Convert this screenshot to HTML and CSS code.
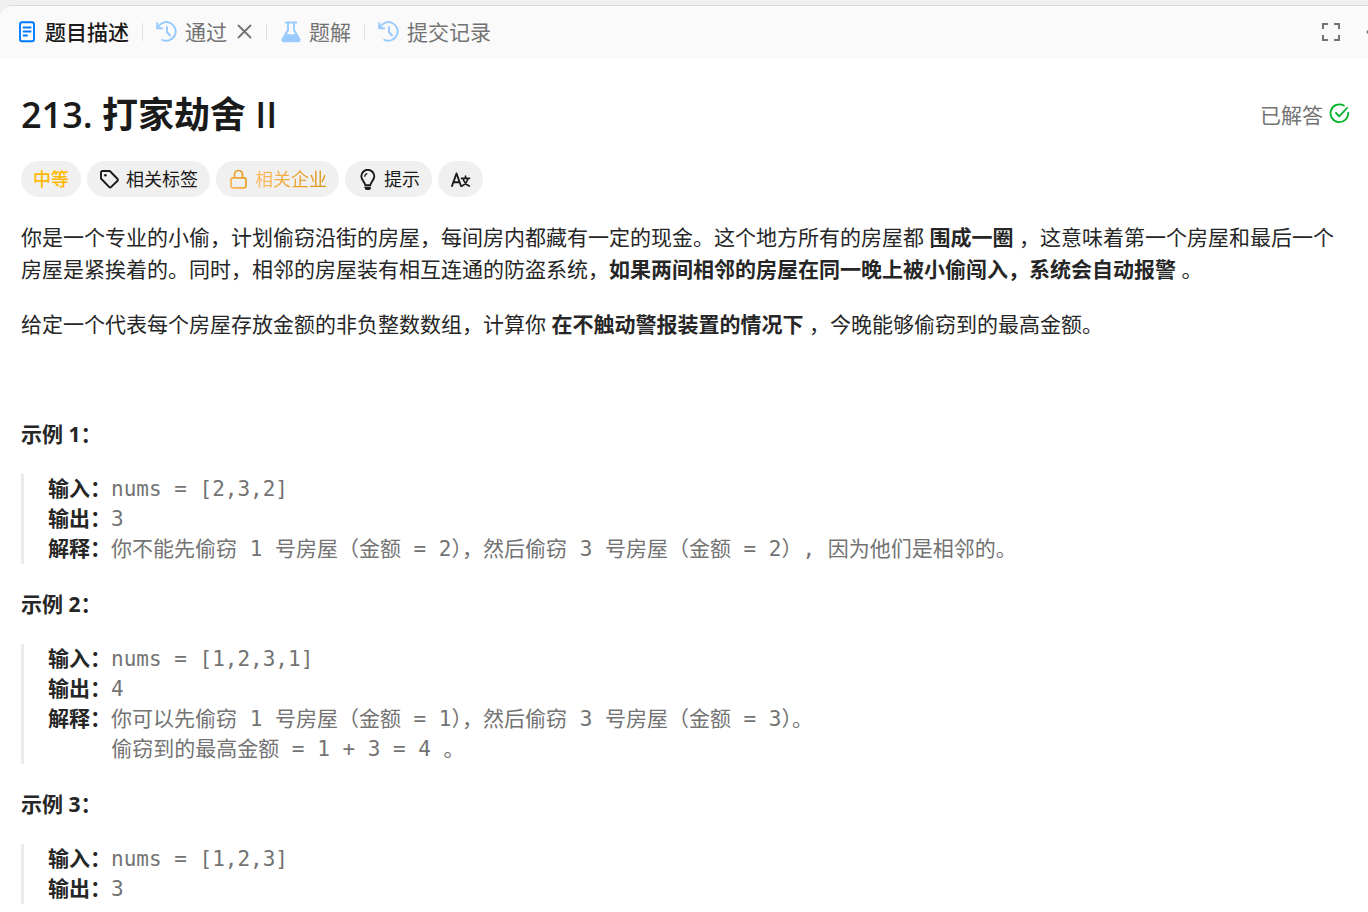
FILE: index.html
```html
<!DOCTYPE html>
<html lang="zh-CN">
<head>
    <meta charset="UTF-8">
    <title>213. 打家劫舍 II</title>
    <link rel="stylesheet" href="styles.css">
</head>
<body>

<div class="panel">
    <!-- 标签栏 -->
    <header class="tabbar">
        <nav class="tabs">
            <button type="button" class="tab active">
                <svg class="tab-icon" viewBox="0 0 22 22" fill="none" stroke="#007aff" stroke-width="1.9" stroke-linecap="round">
                    <rect x="4" y="1.2" width="14" height="19" rx="2"/>
                    <path d="M7.6 6.5h7M7.6 10.5h7M7.6 14.5h3.4"/>
                </svg>
                <span>题目描述</span>
            </button>
            <span class="sep"></span>
            <div class="tab-group">
                <button type="button" class="tab">
                    <svg class="tab-icon" viewBox="0 0 22 22" fill="none" stroke="#99cbff" stroke-width="2" stroke-linecap="round" stroke-linejoin="round">
                        <path d="M1.2 2.2v5h5M1.7 7A9.3 9.3 0 1 1 6.3 18.8M11 6v5l3 3.5"/>
                    </svg>
                    <span>通过</span>
                </button>
                <button type="button" class="close" aria-label="关闭">
                    <svg viewBox="0 0 18 18" fill="none" stroke="#737373" stroke-width="1.8" stroke-linecap="round">
                        <path d="M3.5 2.5l12 12M15.5 2.5l-12 12"/>
                    </svg>
                </button>
            </div>
            <span class="sep"></span>
            <button type="button" class="tab">
                <svg class="tab-icon" viewBox="0 0 22 22">
                    <path fill="#99cbff" fill-rule="evenodd" d="M5.8 0.5h10.4a1 1 0 0 1 0 2H15v6.2l5.2 9.1a2.2 2.2 0 0 1-1.9 3.4H3.7a2.2 2.2 0 0 1-1.9-3.4L7 8.7V2.5H5.8a1 1 0 0 1 0-2zM9 2.5v6.7L6.8 13.2h8.4L13 9.2V2.5z"/>
                </svg>
                <span>题解</span>
            </button>
            <span class="sep"></span>
            <button type="button" class="tab">
                <svg class="tab-icon" viewBox="0 0 22 22" fill="none" stroke="#99cbff" stroke-width="2" stroke-linecap="round" stroke-linejoin="round">
                    <path d="M1.2 2.2v5h5M1.7 7A9.3 9.3 0 1 1 6.3 18.8M11 6v5l3 3.5"/>
                </svg>
                <span>提交记录</span>
            </button>
        </nav>
        <div class="tools">
            <button type="button" class="tool" aria-label="全屏">
                <svg viewBox="0 0 22 22" fill="none" stroke="#737373" stroke-width="2">
                    <path d="M3 8V3h5M14 3h5v5M19 14v5h-5M8 19H3v-5"/>
                </svg>
            </button>
            <button type="button" class="tool" aria-label="收起">
                <svg viewBox="0 0 22 22" fill="none" stroke="#737373" stroke-width="2" stroke-linecap="round">
                    <path d="M10 2L1.5 11l8.5 9"/>
                </svg>
            </button>
        </div>
    </header>

    <main class="content">
        <div class="title-row">
            <h1>213. 打家劫舍 II</h1>
            <div class="solved">
                <span>已解答</span>
                <svg viewBox="0 0 21 21" fill="none" stroke="#02b128" stroke-width="1.8" stroke-linecap="round" stroke-linejoin="round">
                    <path d="M14.8 2.5A8.9 8.9 0 1 0 19.3 9.6M7 10l3.2 3.3L18 5"/>
                </svg>
            </div>
        </div>

        <div class="tags">
            <span class="tag medium">中等</span>
            <button type="button" class="tag">
                <svg viewBox="0 0 21 21" fill="none" stroke="#1a1a1a" stroke-width="1.9" stroke-linejoin="round">
                    <path d="M2 3.3v6.2l8.3 8.6a1.2 1.2 0 0 0 1.7 0l6.6-6.4a1.2 1.2 0 0 0 0-1.7L10.800 2H3.300A1.300 1.300 0 0 0 2 3.300z"/>
                    <circle cx="6.4" cy="6.3" r="1.3" fill="#1a1a1a" stroke="none"/>
                </svg>
                <span>相关标签</span>
            </button>
            <button type="button" class="tag">
                <svg viewBox="0 0 21 21" fill="none" stroke="url(#gold)" stroke-width="1.7">
                    <defs>
                        <linearGradient id="gold" x1="0" y1="1" x2="1" y2="0">
                            <stop offset="0" stop-color="#ffb65b"/>
                            <stop offset="1" stop-color="#d9940b"/>
                        </linearGradient>
                    </defs>
                    <path d="M5 8.8h11a2 2 0 0 1 2 2v6a2 2 0 0 1-2 2H5a2 2 0 0 1-2-2v-6a2 2 0 0 1 2-2zM6.5 8.8V5.5a4 4 0 0 1 8 0v3.3"/>
                </svg>
                <span class="premium">相关企业</span>
            </button>
            <button type="button" class="tag">
                <svg viewBox="0 0 21 21" fill="none" stroke="#1a1a1a" stroke-width="1.9" stroke-linecap="round" stroke-linejoin="round">
                    <path d="M8.3 16.3c0-3.2-4-4.5-4-9a6.5 6.5 0 0 1 13 0c0 4.5-4 5.8-4 9z"/>
                    <path d="M7.8 7.2a3 3 0 0 1 2-2.5" stroke-width="1.4"/>
                    <path d="M8 18.3h5.6a2.8 2.8 0 0 1-5.6 0z" fill="#1a1a1a" stroke-width="1"/>
                </svg>
                <span>提示</span>
            </button>
            <button type="button" class="tag" aria-label="切换语言">
                <svg viewBox="0 0 21 21" fill="none" stroke="#1a1a1a" stroke-width="1.9" stroke-linecap="round" stroke-linejoin="round">
                    <path d="M2 17L6.5 4.5l4.5 12.5M3.5 13.2h6"/>
                    <path d="M11.5 9.3h8M15.5 7v2M18 9.5c-1 3.5-3 6-6 7.5M13 9.5c1 3.5 3 6 6.3 7.5" stroke-width="1.7"/>
                </svg>
            </button>
        </div>

        <!-- 题目正文 -->
        <div class="description">
            <p>你是一个专业的小偷，计划偷窃沿街的房屋，每间房内都藏有一定的现金。这个地方所有的房屋都 <strong>围成一圈</strong> ，这意味着第一个房屋和最后一个房屋是紧挨着的。同时，相邻的房屋装有相互连通的防盗系统，<strong>如果两间相邻的房屋在同一晚上被小偷闯入，系统会自动报警</strong> 。</p>
            <p>给定一个代表每个房屋存放金额的非负整数数组，计算你 <strong>在不触动警报装置的情况下</strong> ，今晚能够偷窃到的最高金额。</p>
            <p>&nbsp;</p>

            <p><strong>示例 1：</strong></p>
<pre><strong>输入：</strong>nums = [2,3,2]
<strong>输出：</strong>3
<strong>解释：</strong>你不能先偷窃 1 号房屋（金额 = 2），然后偷窃 3 号房屋（金额 = 2）, 因为他们是相邻的。
</pre>

            <p><strong>示例 2：</strong></p>
<pre><strong>输入：</strong>nums = [1,2,3,1]
<strong>输出：</strong>4
<strong>解释：</strong>你可以先偷窃 1 号房屋（金额 = 1），然后偷窃 3 号房屋（金额 = 3）。
     偷窃到的最高金额 = 1 + 3 = 4 。
</pre>

            <p><strong>示例 3：</strong></p>
<pre><strong>输入：</strong>nums = [1,2,3]
<strong>输出：</strong>3
</pre>
        </div>
    </main>
</div>

</body>
</html>
```
FILE: styles.css
```css
/* 全局 */
* {
    box-sizing: border-box;
}
body {
    margin: 0;
    padding-top: 5px;
    background-color: #f0f0f0;
    color: #262626;
    font-family: "Open Sans", "Noto Sans CJK SC", sans-serif;
    font-size: 21px;
    overflow-x: hidden;
}
button {
    border: 0;
    padding: 0;
    background: none;
    color: inherit;
    font: inherit;
    cursor: pointer;
}
svg {
    display: block;
    flex-shrink: 0;
}
.panel {
    border-top: 1px solid #d9d9d9;
    border-top-left-radius: 12px;
    background-color: #fff;
    overflow: hidden;
}

/* 标签栏 */
.tabbar {
    display: flex;
    justify-content: space-between;
    height: 53px;
    padding: 0 0 2px 16px;
    background-color: #fafafa;
}
.tabs {
    display: flex;
    align-items: center;
    gap: 13px;
}
.tab-group {
    display: flex;
    align-items: center;
    gap: 8px;
}
.tab {
    display: flex;
    align-items: center;
    gap: 7px;
    color: #737373;
    line-height: 28px;
    white-space: nowrap;
}
.tab.active {
    color: #1a1a1a;
    font-weight: 500;
}
.tab-icon {
    width: 22px;
    height: 22px;
}
.close svg {
    width: 18px;
    height: 18px;
}
.sep {
    width: 1px;
    height: 18px;
    background-color: #e0e0e0;
}
.tools {
    display: flex;
    align-items: center;
    gap: 24px;
    margin-right: -20px;
}
.tool svg {
    width: 22px;
    height: 22px;
}

/* 内容 */
.content {
    padding: 32px 18px 24px 21px;
}
.title-row {
    display: flex;
    align-items: center;
    justify-content: space-between;
}
h1 {
    margin: 0;
    color: #1a1a1a;
    font-size: 36px;
    font-weight: 600;
    line-height: 48px;
}
.solved {
    display: flex;
    align-items: center;
    gap: 6px;
    padding-bottom: 3px;
    color: #737373;
}
.solved svg {
    width: 21px;
    height: 21px;
}
.tags {
    display: flex;
    gap: 6px;
    margin-top: 22px;
}
.tag {
    display: flex;
    align-items: center;
    gap: 6px;
    height: 36px;
    padding: 0 12px;
    border-radius: 18px;
    background-color: #f0f0f0;
    color: #1a1a1a;
    font-size: 18px;
    line-height: 24px;
}
.tag svg {
    width: 21px;
    height: 21px;
}
.medium {
    color: #ffb800;
    font-weight: 500;
}
.premium {
    background: linear-gradient(90deg, #ffbb66, #d9940b);
    background-clip: text;
    color: transparent;
}
.description {
    margin-top: 24px;
    line-height: 32px;
}
.description p {
    margin: 0 0 23px;
}
.description pre {
    margin: 24px 0;
    padding-left: 24px;
    border-left: 3px solid #ebebeb;
    color: #737373;
    font-family: "DejaVu Sans Mono", "Noto Sans CJK SC", monospace;
    font-size: 21px;
    line-height: 30px;
    white-space: pre-wrap;
    text-spacing-trim: normal;
}
.description pre strong {
    color: #262626;
}
```
